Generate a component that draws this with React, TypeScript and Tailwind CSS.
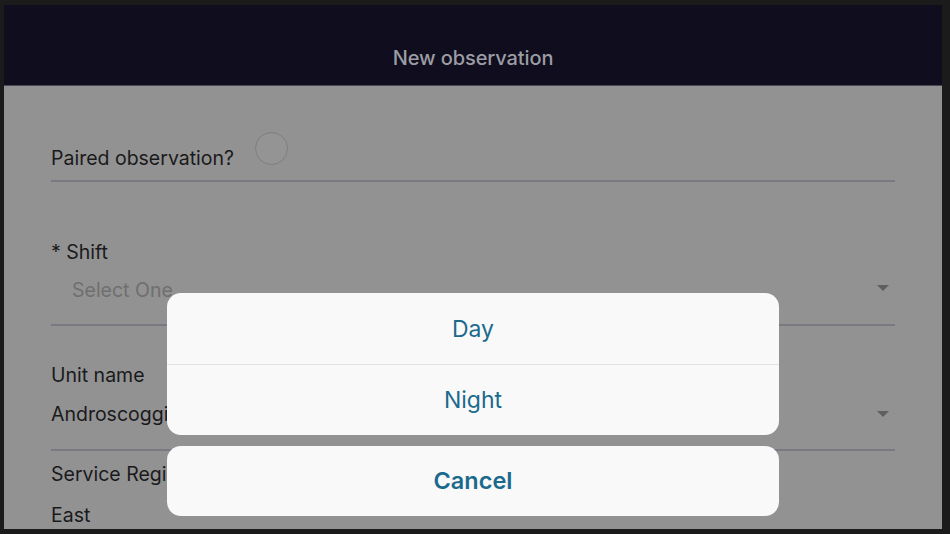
import React from "react";

function Caret({ raised }: { raised?: boolean }) {
  return (
    <svg
      width="12"
      height="6"
      viewBox="0 0 12 6"
      className={raised ? "mr-[6px] mb-[4px]" : "mr-[6px]"}
    >
      <path d="M0 0 L12 0 L6 6 Z" fill="#5f5f62" />
    </svg>
  );
}

export default function App() {
  const font = { fontFamily: "Inter, 'Noto Sans', sans-serif" };
  return (
    <div className="w-[950px] h-[534px] bg-[#1b1b1b] pt-[5px] pl-[4px]" style={font}>
      <div className="relative w-[938px] h-[524px] overflow-hidden flex flex-col bg-[#929292]">
        <div className="h-[81px] shrink-0 bg-[#0f0d1e] border-b border-[#4a4858] flex items-center justify-center pt-[26px]">
          <span className="text-[20px] font-medium text-[#9c9ca3] tracking-[-0.1px]">New observation</span>
        </div>
        <div className="flex flex-col px-[47px] text-[19.5px] leading-[24px] text-[#1a1a1c]">
          <div className="flex items-end h-[94px] pb-[10px]">
            <span>Paired observation?</span>
            <div className="ml-[21px] mb-[5px] w-[33px] h-[33px] rounded-full border-[1.5px] border-[#7e7e7e] bg-[#949494]" />
          </div>
          <div className="h-[2px] bg-[#7a7982]" />
          <div className="mt-[58px]">* Shift</div>
          <div className="mt-[14px] flex items-center justify-between">
            <span className="pl-[21px] text-[#6f6f6f]">Select One</span>
            <Caret raised />
          </div>
          <div className="mt-[22px] h-[2px] bg-[#7a7982]" />
          <div className="mt-[37px]">Unit name</div>
          <div className="mt-[15px] flex items-center justify-between">
            <span>Androscoggin</span>
            <Caret />
          </div>
          <div className="mt-[23px] h-[2px] bg-[#7a7982]" />
          <div className="mt-[11px]">Service Region</div>
          <div className="mt-[17px]">East</div>
        </div>

        <div className="absolute left-[163px] top-[288px] w-[612px] flex flex-col gap-[11px]">
          <div className="rounded-[14px] bg-[#f9f9f9] flex flex-col overflow-hidden">
            <div className="h-[71px] flex items-center justify-center text-[23px] text-[#1b6a8d] pt-[2px]">Day</div>
            <div className="h-px bg-[#e2e2e4]" />
            <div className="h-[70px] flex items-center justify-center text-[23px] text-[#1b6a8d]">Night</div>
          </div>
          <div className="h-[70px] rounded-[14px] bg-[#f9f9f9] flex items-center justify-center text-[23.5px] font-semibold text-[#1b6a8d]">
            Cancel
          </div>
        </div>
      </div>
    </div>
  );
}
